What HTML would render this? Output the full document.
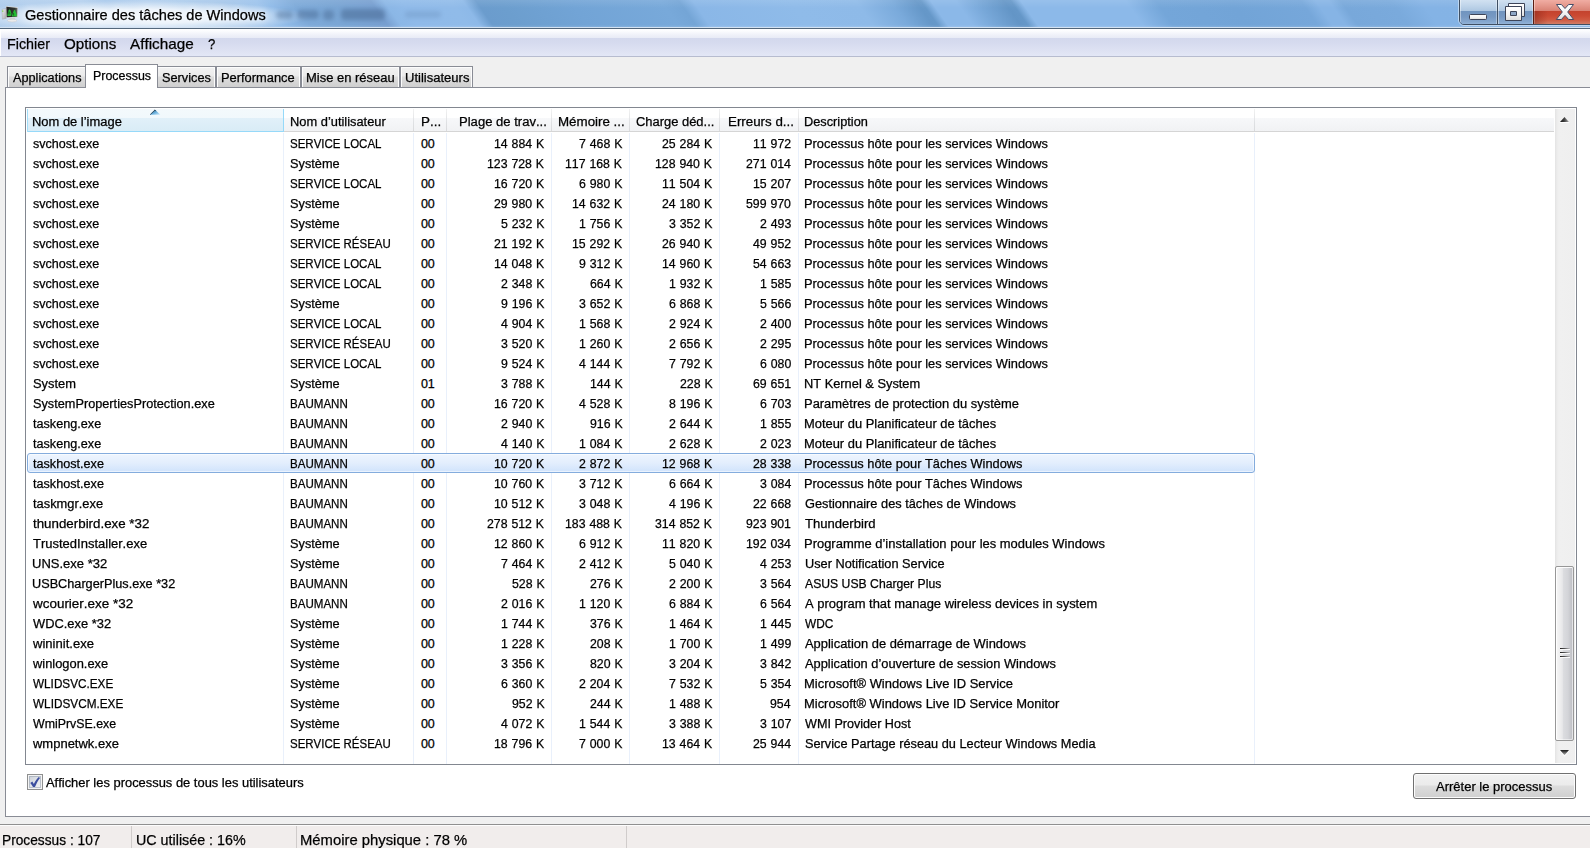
<!DOCTYPE html>
<html lang="fr"><head><meta charset="utf-8"><title>Gestionnaire des tâches de Windows</title>
<style>
html,body{margin:0;padding:0}
body{width:1590px;height:848px;overflow:hidden;position:relative;background:#f0f0f0;font-family:"Liberation Sans",sans-serif;font-kerning:none;color:#000}
div,span,svg{position:absolute;box-sizing:border-box}
.t{white-space:pre;line-height:20px;height:20px;transform-origin:0 0;display:block}
.ttl{text-shadow:0 0 6px rgba(255,255,255,.95),0 0 10px rgba(255,255,255,.8),0 0 14px rgba(255,255,255,.6)}
/* title bar */
#tb{left:0;top:0;width:1590px;height:27px;background:#8db8e8}
#tbl1{left:0;top:27px;width:1590px;height:1px;background:#d3e2f2}
#tbl2{left:0;top:28px;width:1590px;height:1px;background:#52667a}
/* menu */
#menubar{left:0;top:29px;width:1590px;height:28px;background:linear-gradient(#ffffff 0,#fbfcfe 2px,#eff1f9 6px,#e8ebf6 9px,#d3d8ed 9px,#d5daee 13px,#dde1f2 21px,#e3e7f6 27px,#b7bccf 27px,#b7bccf 28px)}
/* pane */
#pane{left:5px;top:87px;width:1600px;height:730px;background:#fff;border:1px solid #898c95}
.tab{top:66px;height:21px;border:1px solid #898c95;border-bottom:none;background:linear-gradient(#f2f2f2 0,#ebebeb 9px,#dddddd 10px,#cfcfcf 20px);box-shadow:inset 1px 1px 0 #fcfcfc,inset -1px 0 0 #fcfcfc}
.tab.act{top:64px;height:24px;background:#fff;box-shadow:none}
/* list */
#list{left:25px;top:107px;width:1552px;height:658px;background:#fff;border:1px solid #828790}
#hdr{left:27px;top:109px;width:1527px;height:23px;background:linear-gradient(#ffffff 0,#ffffff 9px,#f7f8fa 9px,#f1f2f4 22px,#d5d5d5 22px,#d5d5d5 23px)}
#hdr1{left:27px;top:109px;width:257px;height:23px;background:linear-gradient(#f3f9fc 0,#f1f8fc 9px,#e1f0f9 9px,#d9ecf6 22px,#96d9f9 22px,#96d9f9 23px);border-right:1px solid #96d9f9;border-left:1px solid #a3def9}
.hsep{top:109px;width:1px;height:22px;background:linear-gradient(#f2f2f2,#dfe1e4 60%,#d9dadc)}
.csep{top:133px;width:1px;height:631px;background:#e9f0fb}
#sortarrow{left:148px;top:107.9px}
#sel{left:27px;width:1228px;height:20px;border:1px solid #84acdd;border-radius:3px;background:linear-gradient(#eef5fe 0,#e3eefd 50%,#d0e3fc 100%);box-shadow:inset 0 0 0 1px rgba(255,255,255,.55)}
/* checkbox */
#cb{left:27px;top:774px;width:16px;height:16px;border:1px solid #8e8f8f;background:linear-gradient(135deg,#c6ccd5 0,#dfe2e7 45%,#f6f6f7 100%);box-shadow:inset 0 0 0 1px #f4f4f4,inset 0 0 0 2px rgba(150,160,175,.55)}
#cb svg{left:-1px;top:-1px}
/* button */
#btn{left:1413px;top:773px;width:163px;height:26px;border:1px solid #707070;border-radius:3px;background:linear-gradient(#f2f2f2 0,#ebebeb 11px,#dddddd 12px,#cfcfcf 24px);box-shadow:inset 0 0 0 1px #fcfcfc}
/* status */
#status{left:0;top:824px;width:1590px;height:24px;background:#f1edec;border-top:1px solid #909090;box-shadow:inset 0 1px 0 #fdfdfd}
.ssep{top:826px;width:1px;height:22px;background:#d0cccb}
#tb{overflow:hidden;background:#86b3e4}
#tbg{left:-60px;top:-4px;width:1710px;height:36px;transform:skewX(35deg);transform-origin:50% 50%;
background:linear-gradient(90deg,
#a9c9eb 0,#b4d0ee 150px,#a7c8eb 175px,#b2cfee 215px,#acccec 250px,#a6c7ea 290px,#9cc3ec 325px,#90bbe8 338px,#7eaad9 362px,#79a5d4 400px,#779fd0 440px,#8bb7e6 453px,#8fbae9 470px,#90bbe9 520px,#8db9e8 532px,#6b9ccd 545px,#6c9ece 570px,#72a4d6 640px,#78a9da 730px,#74a5d6 748px,#8ab7e7 762px,#8fbbe9 860px,#8ebae8 925px,#7aaadb 960px,#6597c8 985px,#6698c9 990px,#8bb8e8 1000px,#8bb8e8 1025px,#78a8d9 1046px,#6395c6 1073px,#6597c8 1080px,#8cb9e9 1090px,#8cb9e9 1195px,#74a6d9 1225px,#72a4d7 1300px,#76a7da 1370px,#86b4e5 1385px,#86b4e5 1398px,#78a8da 1410px,#7aaadc 1460px,#84b3e5 1490px,#86b4e6 1710px)}
#tbv{left:0;top:0;width:1590px;height:27px;background:linear-gradient(rgba(255,255,255,.10) 0,rgba(255,255,255,0) 8px,rgba(255,255,255,0) 25px,rgba(255,255,255,.12) 27px)}
#glow{left:-40px;top:0px;width:350px;height:32px;background:radial-gradient(ellipse 50% 50% at 50% 52%,rgba(255,255,255,.82) 0,rgba(255,255,255,.72) 45%,rgba(255,255,255,.35) 75%,rgba(255,255,255,0) 100%)}
.smg{filter:blur(2px);border-radius:4px}
#wbo{left:1458px;top:-6px;width:140px;height:32px;border:1px solid rgba(205,225,246,.75);border-radius:0 0 0 6px}
#wb{left:1459px;top:-5px;width:140px;height:30px;border:1px solid #3f4f63;border-radius:0 0 0 5px;overflow:hidden}
#wb>*{margin-top:4px}
#bmin,#bmax{top:0;height:24px;background:linear-gradient(#d1e1f1 0,#c2d6eb 5px,#afc8e2 10.5px,#7094bf 11.5px,#7799c3 17px,#86a8cf 22px,#94b4d8 24px);box-shadow:inset 1px 0 0 rgba(255,255,255,.45),inset -1px 0 0 rgba(255,255,255,.35)}
#bmin{left:0;width:37px}
#bmax{left:38px;width:35px}
.wdiv{top:0;width:1px;height:24px;background:#3f4f63}
#bclose{left:73px;top:0;width:70px;height:24px;border-left:1px solid #5a1c12;background:linear-gradient(#f0ada3 0,#e69a8e 5px,#d98375 10.5px,#c4432e 11.5px,#cb4a33 16px,#cf5a42 20px,#d27d66 24px);box-shadow:inset 1px 0 0 rgba(255,220,210,.6)}
#wb svg{margin-top:4px}
#sb{left:1555px;top:109px;width:20px;height:654px;background:linear-gradient(90deg,#e3e3e3 0,#ececec 2px,#f0f0f0 4px,#efefef 100%)}
#thumb{left:1555px;top:566px;width:19px;height:175px;border:1px solid #979797;border-radius:2px;background:linear-gradient(90deg,#f6f6f6 0,#ececed 5px,#e6e6e8 6.5px,#dcdde0 7px,#d3d4d8 12px,#c0c1c6 16px,#d2d2d6 17px);box-shadow:inset 1px 1px 0 rgba(255,255,255,.9),inset -1px -1px 0 rgba(255,255,255,.5)}
#grip{left:4px;top:81px;width:10px;height:10px;background:
 linear-gradient(90deg,#1e1e1e,#555 45%,#c2c2c6) 0 0/10px 1px no-repeat,
 linear-gradient(90deg,#1e1e1e,#555 45%,#c2c2c6) 0 4px/10px 1px no-repeat,
 linear-gradient(90deg,#1e1e1e,#555 45%,#c2c2c6) 0 8px/10px 1px no-repeat,
 linear-gradient(rgba(255,255,255,.85),rgba(255,255,255,.85)) 0 1px/10px 1px no-repeat,
 linear-gradient(rgba(255,255,255,.85),rgba(255,255,255,.85)) 0 5px/10px 1px no-repeat,
 linear-gradient(rgba(255,255,255,.85),rgba(255,255,255,.85)) 0 9px/10px 1px no-repeat}
.tab.nor{border-right:none;box-shadow:inset 1px 1px 0 #fcfcfc}
.tab.nol{border-left:none;box-shadow:inset 0 1px 0 #fcfcfc,inset -1px 0 0 #fcfcfc}
.t{-webkit-text-stroke:0.25px #000}
#mbl{left:0;top:29px;width:1px;height:27px;background:#fff}
#bcb{left:1533px;top:24px;width:57px;height:1px;background:#6e2418}
#bclose::after{content:"";position:absolute;left:0;top:11px;width:14px;height:13px;background:linear-gradient(90deg,rgba(110,25,15,.38),rgba(110,25,15,0))}

</style></head>
<body>
<div id="tb"><div id="tbg"></div><div id="tbv"></div><div id="glow"></div><div class="smg" style="left:276px;top:11px;width:17px;height:8px;background:#3f5f88;opacity:0.38"></div><div class="smg" style="left:297px;top:10px;width:22px;height:9px;background:#3f5f88;opacity:0.42"></div><div class="smg" style="left:323px;top:10px;width:11px;height:10px;background:#3f5f88;opacity:0.4"></div><div class="smg" style="left:341px;top:9px;width:44px;height:11px;background:#3f5f88;opacity:0.45"></div><div class="smg" style="left:405px;top:11px;width:36px;height:7px;background:#3f5f88;opacity:0.16"></div></div>
<div id="tbl1"></div><div id="tbl2"></div>
<svg id="ico" width="20" height="20" viewBox="0 0 20 20" style="left:0;top:4px">
<defs><linearGradient id="ig" x1="0" y1="0" x2="1" y2="1"><stop offset="0" stop-color="#f2f2f2"/><stop offset="1" stop-color="#a4a6a9"/></linearGradient>
<linearGradient id="sg2" x1="0" y1="0" x2="1" y2="0"><stop offset="0" stop-color="#1f211f"/><stop offset=".75" stop-color="#333633"/><stop offset="1" stop-color="#6a6c6a"/></linearGradient></defs>
<path d="M2 5.4 L6.2 4.4 L6.4 14.2 L2.4 15.2 Z" fill="url(#ig)" stroke="#9a9da1" stroke-width=".4"/>
<rect x="2.2" y="6.4" width="1.1" height="1.5" fill="#7bd44e"/>
<path d="M5.9 2.1 L17.9 3.3 L17.7 13.4 L6.3 13.9 Z" fill="#d9d9d9"/>
<path d="M6.4 2.8 L17.4 3.9 L17.2 12.8 L6.7 13.2 Z" fill="url(#sg2)"/>
<path d="M7.3 11.2 L8 8.6 L8.8 6.2 L9.7 5.3 L10.5 6.6 L11.4 9.4 L11.2 11.8 L7.5 12 Z" fill="#23be33"/>
<path d="M11.9 12 L13 8.8 L14.1 5.9 L15 5.7 L15.9 8.4 L17 11.2 L16.9 12.3 L12 12.4 Z" fill="#23be33"/>
<path d="M8.3 8.3 L10.2 8.2 M8 9.9 L10.6 9.8 M13.6 8.9 L13.6 11.6" stroke="#0d4a14" stroke-width=".7"/>
<path d="M9.8 13.9 L14.8 13.7 L15.6 15.8 L9 16.1 Z" fill="#cfd0d2"/>
<ellipse cx="12.2" cy="16.6" rx="4.8" ry="1.4" fill="#ebebeb" stroke="#bfc1c4" stroke-width=".4"/>
</svg>
<div id="wbo"></div><div id="bcb"></div>
<div id="wb">
 <div id="bmin"></div><div id="bmax"></div><div id="bclose"></div>
 <div class="wdiv" style="left:37px"></div>
 <svg width="131" height="24" viewBox="0 0 131 24" style="left:-1px;top:0">
  <defs><linearGradient id="wg" x1="0" y1="0" x2="0" y2="1"><stop offset="0" stop-color="#ffffff"/><stop offset=".55" stop-color="#f4f4f4"/><stop offset="1" stop-color="#dcdcdc"/></linearGradient></defs>
  <rect x="10.5" y="14.5" width="17" height="5" rx="1" fill="url(#wg)" stroke="#3d4458" stroke-width="1"/>
  <path d="M49.5 3.5 H65.5 V16.5 H49.5 Z" fill="url(#wg)" stroke="#3d4458" stroke-width="1" stroke-linejoin="round"/>
  <path d="M46.5 6.5 H62.5 V20.5 H46.5 Z M51.5 11.5 V15.5 H57.5 V11.5 Z" fill="url(#wg)" fill-rule="evenodd" stroke="#3d4458" stroke-width="1" stroke-linejoin="round"/>
  <rect x="52" y="12" width="5" height="3" fill="#8ea7c6"/>
  <path d="M97.5 4.5 H102.4 L106 8.5 L109.6 4.5 H114.5 L108.7 12 L114.7 19.5 H109.6 L106 15.4 L102.4 19.5 H97.3 L103.3 12 Z" fill="url(#wg)" stroke="#454c66" stroke-width="1" stroke-linejoin="round"/>
 </svg>
</div>

<span class="t ttl" style="left:24.77px;top:4.50px;font-size:15px;transform:scaleX(0.9723);">Gestionnaire des tâches de Windows</span>
<div id="menubar"></div><div id="mbl"></div>
<span class="t" style="left:6.63px;top:33.50px;font-size:15px;transform:scaleX(0.9534);">Fichier</span>
<span class="t" style="left:63.78px;top:33.50px;font-size:15px;transform:scaleX(1.0111);">Options</span>
<span class="t" style="left:130.47px;top:33.50px;font-size:15px;transform:scaleX(1.0187);">Affichage</span>
<span class="t" style="left:208.06px;top:33.50px;font-size:15px;transform:scaleX(0.8786);">?</span>
<div id="pane"></div>
<div class="tab nor" style="left:7px;width:78px"></div>
<div class="tab act" style="left:85px;width:73px"></div>
<div class="tab nol" style="left:158px;width:58px"></div>
<div class="tab" style="left:216px;width:85px"></div>
<div class="tab" style="left:301px;width:99px"></div>
<div class="tab" style="left:400px;width:73px"></div>
<span class="t" style="left:13.28px;top:68.00px;font-size:12.5px;transform:scaleX(1.0161);">Applications</span>
<span class="t" style="left:92.58px;top:66.00px;font-size:12.5px;transform:scaleX(0.9951);">Processus</span>
<span class="t" style="left:161.72px;top:68.00px;font-size:12.5px;transform:scaleX(1.0189);">Services</span>
<span class="t" style="left:221.24px;top:68.00px;font-size:12.5px;transform:scaleX(1.0289);">Performance</span>
<span class="t" style="left:306.24px;top:68.00px;font-size:12.5px;transform:scaleX(1.0370);">Mise en réseau</span>
<span class="t" style="left:404.99px;top:68.00px;font-size:12.5px;transform:scaleX(1.0429);">Utilisateurs</span>
<div id="list">
</div>
<div id="hdr"></div><div id="hdr1"></div>
<div class="hsep" style="left:413px"></div>
<div class="hsep" style="left:446px"></div>
<div class="hsep" style="left:551px"></div>
<div class="hsep" style="left:629px"></div>
<div class="hsep" style="left:719px"></div>
<div class="hsep" style="left:798px"></div>
<div class="hsep" style="left:1254px"></div>
<div class="csep" style="left:283px"></div>
<div class="csep" style="left:413px"></div>
<div class="csep" style="left:446px"></div>
<div class="csep" style="left:551px"></div>
<div class="csep" style="left:629px"></div>
<div class="csep" style="left:719px"></div>
<div class="csep" style="left:798px"></div>
<div class="csep" style="left:1254px"></div>
<svg id="sortarrow" width="14" height="8" viewBox="0 0 14 8"><defs><linearGradient id="sg" x1="0.15" y1="0.3" x2="0.9" y2="1"><stop offset="0" stop-color="#2f6c97"/><stop offset=".45" stop-color="#6fb4e0"/><stop offset="1" stop-color="#c9e7f8"/></linearGradient></defs><path d="M1.2 7 L7 1 L12.8 7 Z" fill="#fff" opacity=".75"/><path d="M2 6.8 L7 1.8 L12.5 6.8 Z" fill="url(#sg)"/><path d="M2.2 6.6 L7 1.9 L7.9 2.8" fill="none" stroke="#1d3b50" stroke-width=".85"/></svg>
<span class="t" style="left:32.34px;top:112.00px;font-size:12.5px;transform:scaleX(1.0345);">Nom de l’image</span>
<span class="t" style="left:289.55px;top:112.00px;font-size:12.5px;transform:scaleX(1.0288);">Nom d’utilisateur</span>
<span class="t" style="left:421.30px;top:112.00px;font-size:12.5px;transform:scaleX(1.0730);">P...</span>
<span class="t" style="left:458.53px;top:112.00px;font-size:12.5px;transform:scaleX(1.0451);">Plage de trav...</span>
<span class="t" style="left:557.61px;top:112.00px;font-size:12.5px;transform:scaleX(1.0672);">Mémoire ...</span>
<span class="t" style="left:635.74px;top:112.00px;font-size:12.5px;transform:scaleX(1.0342);">Charge déd...</span>
<span class="t" style="left:727.61px;top:112.00px;font-size:12.5px;transform:scaleX(1.0661);">Erreurs d...</span>
<span class="t" style="left:804.45px;top:112.00px;font-size:12.5px;transform:scaleX(1.0216);">Description</span>
<div id="sel" style="top:453px"></div>
<span class="t" style="left:32.85px;top:134.00px;font-size:12.5px;transform:scaleX(1.0046);">svchost.exe</span>
<span class="t" style="left:289.98px;top:134.00px;font-size:12.5px;transform:scaleX(0.9211);">SERVICE LOCAL</span>
<span class="t" style="left:420.91px;top:134.00px;font-size:12.5px;">00</span>
<span class="t" style="left:494.26px;top:134.00px;font-size:12.5px;transform:scaleX(0.9830);word-spacing:0.5px;">14 884 K</span>
<span class="t" style="left:579.00px;top:134.00px;font-size:12.5px;transform:scaleX(0.9830);word-spacing:0.5px;">7 468 K</span>
<span class="t" style="left:662.16px;top:134.00px;font-size:12.5px;transform:scaleX(0.9830);word-spacing:0.5px;">25 284 K</span>
<span class="t" style="left:752.94px;top:134.00px;font-size:12.5px;transform:scaleX(0.9830);word-spacing:0.5px;">11 972</span>
<span class="t" style="left:804.45px;top:134.00px;font-size:12.5px;transform:scaleX(1.0262);">Processus hôte pour les services Windows</span>
<span class="t" style="left:32.85px;top:154.00px;font-size:12.5px;transform:scaleX(1.0046);">svchost.exe</span>
<span class="t" style="left:289.92px;top:154.00px;font-size:12.5px;transform:scaleX(1.0210);">Système</span>
<span class="t" style="left:420.91px;top:154.00px;font-size:12.5px;">00</span>
<span class="t" style="left:487.43px;top:154.00px;font-size:12.5px;transform:scaleX(0.9830);word-spacing:0.5px;">123 728 K</span>
<span class="t" style="left:565.33px;top:154.00px;font-size:12.5px;transform:scaleX(0.9830);word-spacing:0.5px;">117 168 K</span>
<span class="t" style="left:655.33px;top:154.00px;font-size:12.5px;transform:scaleX(0.9830);word-spacing:0.5px;">128 940 K</span>
<span class="t" style="left:745.85px;top:154.00px;font-size:12.5px;transform:scaleX(0.9830);word-spacing:0.5px;">271 014</span>
<span class="t" style="left:804.45px;top:154.00px;font-size:12.5px;transform:scaleX(1.0262);">Processus hôte pour les services Windows</span>
<span class="t" style="left:32.85px;top:174.00px;font-size:12.5px;transform:scaleX(1.0046);">svchost.exe</span>
<span class="t" style="left:289.98px;top:174.00px;font-size:12.5px;transform:scaleX(0.9211);">SERVICE LOCAL</span>
<span class="t" style="left:420.91px;top:174.00px;font-size:12.5px;">00</span>
<span class="t" style="left:494.26px;top:174.00px;font-size:12.5px;transform:scaleX(0.9830);word-spacing:0.5px;">16 720 K</span>
<span class="t" style="left:579.00px;top:174.00px;font-size:12.5px;transform:scaleX(0.9830);word-spacing:0.5px;">6 980 K</span>
<span class="t" style="left:662.16px;top:174.00px;font-size:12.5px;transform:scaleX(0.9830);word-spacing:0.5px;">11 504 K</span>
<span class="t" style="left:752.94px;top:174.00px;font-size:12.5px;transform:scaleX(0.9830);word-spacing:0.5px;">15 207</span>
<span class="t" style="left:804.45px;top:174.00px;font-size:12.5px;transform:scaleX(1.0262);">Processus hôte pour les services Windows</span>
<span class="t" style="left:32.85px;top:194.00px;font-size:12.5px;transform:scaleX(1.0046);">svchost.exe</span>
<span class="t" style="left:289.92px;top:194.00px;font-size:12.5px;transform:scaleX(1.0210);">Système</span>
<span class="t" style="left:420.91px;top:194.00px;font-size:12.5px;">00</span>
<span class="t" style="left:494.26px;top:194.00px;font-size:12.5px;transform:scaleX(0.9830);word-spacing:0.5px;">29 980 K</span>
<span class="t" style="left:572.16px;top:194.00px;font-size:12.5px;transform:scaleX(0.9830);word-spacing:0.5px;">14 632 K</span>
<span class="t" style="left:662.16px;top:194.00px;font-size:12.5px;transform:scaleX(0.9830);word-spacing:0.5px;">24 180 K</span>
<span class="t" style="left:745.97px;top:194.00px;font-size:12.5px;transform:scaleX(0.9830);word-spacing:0.5px;">599 970</span>
<span class="t" style="left:804.45px;top:194.00px;font-size:12.5px;transform:scaleX(1.0262);">Processus hôte pour les services Windows</span>
<span class="t" style="left:32.85px;top:214.00px;font-size:12.5px;transform:scaleX(1.0046);">svchost.exe</span>
<span class="t" style="left:289.92px;top:214.00px;font-size:12.5px;transform:scaleX(1.0210);">Système</span>
<span class="t" style="left:420.91px;top:214.00px;font-size:12.5px;">00</span>
<span class="t" style="left:501.10px;top:214.00px;font-size:12.5px;transform:scaleX(0.9830);word-spacing:0.5px;">5 232 K</span>
<span class="t" style="left:579.00px;top:214.00px;font-size:12.5px;transform:scaleX(0.9830);word-spacing:0.5px;">1 756 K</span>
<span class="t" style="left:669.00px;top:214.00px;font-size:12.5px;transform:scaleX(0.9830);word-spacing:0.5px;">3 352 K</span>
<span class="t" style="left:759.70px;top:214.00px;font-size:12.5px;transform:scaleX(0.9830);word-spacing:0.5px;">2 493</span>
<span class="t" style="left:804.45px;top:214.00px;font-size:12.5px;transform:scaleX(1.0262);">Processus hôte pour les services Windows</span>
<span class="t" style="left:32.85px;top:234.00px;font-size:12.5px;transform:scaleX(1.0046);">svchost.exe</span>
<span class="t" style="left:289.98px;top:234.00px;font-size:12.5px;transform:scaleX(0.9176);">SERVICE RÉSEAU</span>
<span class="t" style="left:420.91px;top:234.00px;font-size:12.5px;">00</span>
<span class="t" style="left:494.26px;top:234.00px;font-size:12.5px;transform:scaleX(0.9830);word-spacing:0.5px;">21 192 K</span>
<span class="t" style="left:572.16px;top:234.00px;font-size:12.5px;transform:scaleX(0.9830);word-spacing:0.5px;">15 292 K</span>
<span class="t" style="left:662.16px;top:234.00px;font-size:12.5px;transform:scaleX(0.9830);word-spacing:0.5px;">26 940 K</span>
<span class="t" style="left:752.94px;top:234.00px;font-size:12.5px;transform:scaleX(0.9830);word-spacing:0.5px;">49 952</span>
<span class="t" style="left:804.45px;top:234.00px;font-size:12.5px;transform:scaleX(1.0262);">Processus hôte pour les services Windows</span>
<span class="t" style="left:32.85px;top:254.00px;font-size:12.5px;transform:scaleX(1.0046);">svchost.exe</span>
<span class="t" style="left:289.98px;top:254.00px;font-size:12.5px;transform:scaleX(0.9211);">SERVICE LOCAL</span>
<span class="t" style="left:420.91px;top:254.00px;font-size:12.5px;">00</span>
<span class="t" style="left:494.26px;top:254.00px;font-size:12.5px;transform:scaleX(0.9830);word-spacing:0.5px;">14 048 K</span>
<span class="t" style="left:579.00px;top:254.00px;font-size:12.5px;transform:scaleX(0.9830);word-spacing:0.5px;">9 312 K</span>
<span class="t" style="left:662.16px;top:254.00px;font-size:12.5px;transform:scaleX(0.9830);word-spacing:0.5px;">14 960 K</span>
<span class="t" style="left:752.87px;top:254.00px;font-size:12.5px;transform:scaleX(0.9830);word-spacing:0.5px;">54 663</span>
<span class="t" style="left:804.45px;top:254.00px;font-size:12.5px;transform:scaleX(1.0262);">Processus hôte pour les services Windows</span>
<span class="t" style="left:32.85px;top:274.00px;font-size:12.5px;transform:scaleX(1.0046);">svchost.exe</span>
<span class="t" style="left:289.98px;top:274.00px;font-size:12.5px;transform:scaleX(0.9211);">SERVICE LOCAL</span>
<span class="t" style="left:420.91px;top:274.00px;font-size:12.5px;">00</span>
<span class="t" style="left:501.10px;top:274.00px;font-size:12.5px;transform:scaleX(0.9830);word-spacing:0.5px;">2 348 K</span>
<span class="t" style="left:589.74px;top:274.00px;font-size:12.5px;transform:scaleX(0.9830);word-spacing:0.5px;">664 K</span>
<span class="t" style="left:669.00px;top:274.00px;font-size:12.5px;transform:scaleX(0.9830);word-spacing:0.5px;">1 932 K</span>
<span class="t" style="left:759.68px;top:274.00px;font-size:12.5px;transform:scaleX(0.9830);word-spacing:0.5px;">1 585</span>
<span class="t" style="left:804.45px;top:274.00px;font-size:12.5px;transform:scaleX(1.0262);">Processus hôte pour les services Windows</span>
<span class="t" style="left:32.85px;top:294.00px;font-size:12.5px;transform:scaleX(1.0046);">svchost.exe</span>
<span class="t" style="left:289.92px;top:294.00px;font-size:12.5px;transform:scaleX(1.0210);">Système</span>
<span class="t" style="left:420.91px;top:294.00px;font-size:12.5px;">00</span>
<span class="t" style="left:501.10px;top:294.00px;font-size:12.5px;transform:scaleX(0.9830);word-spacing:0.5px;">9 196 K</span>
<span class="t" style="left:579.00px;top:294.00px;font-size:12.5px;transform:scaleX(0.9830);word-spacing:0.5px;">3 652 K</span>
<span class="t" style="left:669.00px;top:294.00px;font-size:12.5px;transform:scaleX(0.9830);word-spacing:0.5px;">6 868 K</span>
<span class="t" style="left:759.70px;top:294.00px;font-size:12.5px;transform:scaleX(0.9830);word-spacing:0.5px;">5 566</span>
<span class="t" style="left:804.45px;top:294.00px;font-size:12.5px;transform:scaleX(1.0262);">Processus hôte pour les services Windows</span>
<span class="t" style="left:32.85px;top:314.00px;font-size:12.5px;transform:scaleX(1.0046);">svchost.exe</span>
<span class="t" style="left:289.98px;top:314.00px;font-size:12.5px;transform:scaleX(0.9211);">SERVICE LOCAL</span>
<span class="t" style="left:420.91px;top:314.00px;font-size:12.5px;">00</span>
<span class="t" style="left:501.10px;top:314.00px;font-size:12.5px;transform:scaleX(0.9830);word-spacing:0.5px;">4 904 K</span>
<span class="t" style="left:579.00px;top:314.00px;font-size:12.5px;transform:scaleX(0.9830);word-spacing:0.5px;">1 568 K</span>
<span class="t" style="left:669.00px;top:314.00px;font-size:12.5px;transform:scaleX(0.9830);word-spacing:0.5px;">2 924 K</span>
<span class="t" style="left:759.64px;top:314.00px;font-size:12.5px;transform:scaleX(0.9830);word-spacing:0.5px;">2 400</span>
<span class="t" style="left:804.45px;top:314.00px;font-size:12.5px;transform:scaleX(1.0262);">Processus hôte pour les services Windows</span>
<span class="t" style="left:32.85px;top:334.00px;font-size:12.5px;transform:scaleX(1.0046);">svchost.exe</span>
<span class="t" style="left:289.98px;top:334.00px;font-size:12.5px;transform:scaleX(0.9176);">SERVICE RÉSEAU</span>
<span class="t" style="left:420.91px;top:334.00px;font-size:12.5px;">00</span>
<span class="t" style="left:501.10px;top:334.00px;font-size:12.5px;transform:scaleX(0.9830);word-spacing:0.5px;">3 520 K</span>
<span class="t" style="left:579.00px;top:334.00px;font-size:12.5px;transform:scaleX(0.9830);word-spacing:0.5px;">1 260 K</span>
<span class="t" style="left:669.00px;top:334.00px;font-size:12.5px;transform:scaleX(0.9830);word-spacing:0.5px;">2 656 K</span>
<span class="t" style="left:759.68px;top:334.00px;font-size:12.5px;transform:scaleX(0.9830);word-spacing:0.5px;">2 295</span>
<span class="t" style="left:804.45px;top:334.00px;font-size:12.5px;transform:scaleX(1.0262);">Processus hôte pour les services Windows</span>
<span class="t" style="left:32.85px;top:354.00px;font-size:12.5px;transform:scaleX(1.0046);">svchost.exe</span>
<span class="t" style="left:289.98px;top:354.00px;font-size:12.5px;transform:scaleX(0.9211);">SERVICE LOCAL</span>
<span class="t" style="left:420.91px;top:354.00px;font-size:12.5px;">00</span>
<span class="t" style="left:501.10px;top:354.00px;font-size:12.5px;transform:scaleX(0.9830);word-spacing:0.5px;">9 524 K</span>
<span class="t" style="left:579.00px;top:354.00px;font-size:12.5px;transform:scaleX(0.9830);word-spacing:0.5px;">4 144 K</span>
<span class="t" style="left:669.00px;top:354.00px;font-size:12.5px;transform:scaleX(0.9830);word-spacing:0.5px;">7 792 K</span>
<span class="t" style="left:759.64px;top:354.00px;font-size:12.5px;transform:scaleX(0.9830);word-spacing:0.5px;">6 080</span>
<span class="t" style="left:804.45px;top:354.00px;font-size:12.5px;transform:scaleX(1.0262);">Processus hôte pour les services Windows</span>
<span class="t" style="left:32.62px;top:374.00px;font-size:12.5px;transform:scaleX(1.0302);">System</span>
<span class="t" style="left:289.92px;top:374.00px;font-size:12.5px;transform:scaleX(1.0210);">Système</span>
<span class="t" style="left:420.91px;top:374.00px;font-size:12.5px;">01</span>
<span class="t" style="left:501.10px;top:374.00px;font-size:12.5px;transform:scaleX(0.9830);word-spacing:0.5px;">3 788 K</span>
<span class="t" style="left:589.74px;top:374.00px;font-size:12.5px;transform:scaleX(0.9830);word-spacing:0.5px;">144 K</span>
<span class="t" style="left:679.74px;top:374.00px;font-size:12.5px;transform:scaleX(0.9830);word-spacing:0.5px;">228 K</span>
<span class="t" style="left:752.93px;top:374.00px;font-size:12.5px;transform:scaleX(0.9830);word-spacing:0.5px;">69 651</span>
<span class="t" style="left:804.45px;top:374.00px;font-size:12.5px;transform:scaleX(1.0262);">NT Kernel &amp; System</span>
<span class="t" style="left:32.62px;top:394.00px;font-size:12.5px;transform:scaleX(1.0179);">SystemPropertiesProtection.exe</span>
<span class="t" style="left:289.55px;top:394.00px;font-size:12.5px;transform:scaleX(0.9246);">BAUMANN</span>
<span class="t" style="left:420.91px;top:394.00px;font-size:12.5px;">00</span>
<span class="t" style="left:494.26px;top:394.00px;font-size:12.5px;transform:scaleX(0.9830);word-spacing:0.5px;">16 720 K</span>
<span class="t" style="left:579.00px;top:394.00px;font-size:12.5px;transform:scaleX(0.9830);word-spacing:0.5px;">4 528 K</span>
<span class="t" style="left:669.00px;top:394.00px;font-size:12.5px;transform:scaleX(0.9830);word-spacing:0.5px;">8 196 K</span>
<span class="t" style="left:759.70px;top:394.00px;font-size:12.5px;transform:scaleX(0.9830);word-spacing:0.5px;">6 703</span>
<span class="t" style="left:804.44px;top:394.00px;font-size:12.5px;transform:scaleX(1.0346);">Paramètres de protection du système</span>
<span class="t" style="left:33.01px;top:414.00px;font-size:12.5px;transform:scaleX(1.0111);">taskeng.exe</span>
<span class="t" style="left:289.55px;top:414.00px;font-size:12.5px;transform:scaleX(0.9246);">BAUMANN</span>
<span class="t" style="left:420.91px;top:414.00px;font-size:12.5px;">00</span>
<span class="t" style="left:501.10px;top:414.00px;font-size:12.5px;transform:scaleX(0.9830);word-spacing:0.5px;">2 940 K</span>
<span class="t" style="left:589.74px;top:414.00px;font-size:12.5px;transform:scaleX(0.9830);word-spacing:0.5px;">916 K</span>
<span class="t" style="left:669.00px;top:414.00px;font-size:12.5px;transform:scaleX(0.9830);word-spacing:0.5px;">2 644 K</span>
<span class="t" style="left:759.68px;top:414.00px;font-size:12.5px;transform:scaleX(0.9830);word-spacing:0.5px;">1 855</span>
<span class="t" style="left:804.44px;top:414.00px;font-size:12.5px;transform:scaleX(1.0323);">Moteur du Planificateur de tâches</span>
<span class="t" style="left:33.01px;top:434.00px;font-size:12.5px;transform:scaleX(1.0111);">taskeng.exe</span>
<span class="t" style="left:289.55px;top:434.00px;font-size:12.5px;transform:scaleX(0.9246);">BAUMANN</span>
<span class="t" style="left:420.91px;top:434.00px;font-size:12.5px;">00</span>
<span class="t" style="left:501.10px;top:434.00px;font-size:12.5px;transform:scaleX(0.9830);word-spacing:0.5px;">4 140 K</span>
<span class="t" style="left:579.00px;top:434.00px;font-size:12.5px;transform:scaleX(0.9830);word-spacing:0.5px;">1 084 K</span>
<span class="t" style="left:669.00px;top:434.00px;font-size:12.5px;transform:scaleX(0.9830);word-spacing:0.5px;">2 628 K</span>
<span class="t" style="left:759.70px;top:434.00px;font-size:12.5px;transform:scaleX(0.9830);word-spacing:0.5px;">2 023</span>
<span class="t" style="left:804.44px;top:434.00px;font-size:12.5px;transform:scaleX(1.0323);">Moteur du Planificateur de tâches</span>
<span class="t" style="left:33.01px;top:454.00px;font-size:12.5px;transform:scaleX(1.0110);">taskhost.exe</span>
<span class="t" style="left:289.55px;top:454.00px;font-size:12.5px;transform:scaleX(0.9246);">BAUMANN</span>
<span class="t" style="left:420.91px;top:454.00px;font-size:12.5px;">00</span>
<span class="t" style="left:494.26px;top:454.00px;font-size:12.5px;transform:scaleX(0.9830);word-spacing:0.5px;">10 720 K</span>
<span class="t" style="left:579.00px;top:454.00px;font-size:12.5px;transform:scaleX(0.9830);word-spacing:0.5px;">2 872 K</span>
<span class="t" style="left:662.16px;top:454.00px;font-size:12.5px;transform:scaleX(0.9830);word-spacing:0.5px;">12 968 K</span>
<span class="t" style="left:752.86px;top:454.00px;font-size:12.5px;transform:scaleX(0.9830);word-spacing:0.5px;">28 338</span>
<span class="t" style="left:804.45px;top:454.00px;font-size:12.5px;transform:scaleX(1.0240);">Processus hôte pour Tâches Windows</span>
<span class="t" style="left:33.01px;top:474.00px;font-size:12.5px;transform:scaleX(1.0110);">taskhost.exe</span>
<span class="t" style="left:289.55px;top:474.00px;font-size:12.5px;transform:scaleX(0.9246);">BAUMANN</span>
<span class="t" style="left:420.91px;top:474.00px;font-size:12.5px;">00</span>
<span class="t" style="left:494.26px;top:474.00px;font-size:12.5px;transform:scaleX(0.9830);word-spacing:0.5px;">10 760 K</span>
<span class="t" style="left:579.00px;top:474.00px;font-size:12.5px;transform:scaleX(0.9830);word-spacing:0.5px;">3 712 K</span>
<span class="t" style="left:669.00px;top:474.00px;font-size:12.5px;transform:scaleX(0.9830);word-spacing:0.5px;">6 664 K</span>
<span class="t" style="left:759.52px;top:474.00px;font-size:12.5px;transform:scaleX(0.9830);word-spacing:0.5px;">3 084</span>
<span class="t" style="left:804.45px;top:474.00px;font-size:12.5px;transform:scaleX(1.0240);">Processus hôte pour Tâches Windows</span>
<span class="t" style="left:33.01px;top:494.00px;font-size:12.5px;transform:scaleX(1.0292);">taskmgr.exe</span>
<span class="t" style="left:289.55px;top:494.00px;font-size:12.5px;transform:scaleX(0.9246);">BAUMANN</span>
<span class="t" style="left:420.91px;top:494.00px;font-size:12.5px;">00</span>
<span class="t" style="left:494.26px;top:494.00px;font-size:12.5px;transform:scaleX(0.9830);word-spacing:0.5px;">10 512 K</span>
<span class="t" style="left:579.00px;top:494.00px;font-size:12.5px;transform:scaleX(0.9830);word-spacing:0.5px;">3 048 K</span>
<span class="t" style="left:669.00px;top:494.00px;font-size:12.5px;transform:scaleX(0.9830);word-spacing:0.5px;">4 196 K</span>
<span class="t" style="left:752.86px;top:494.00px;font-size:12.5px;transform:scaleX(0.9830);word-spacing:0.5px;">22 668</span>
<span class="t" style="left:804.86px;top:494.00px;font-size:12.5px;transform:scaleX(1.0225);">Gestionnaire des tâches de Windows</span>
<span class="t" style="left:33.00px;top:514.00px;font-size:12.5px;transform:scaleX(1.0666);">thunderbird.exe *32</span>
<span class="t" style="left:289.55px;top:514.00px;font-size:12.5px;transform:scaleX(0.9246);">BAUMANN</span>
<span class="t" style="left:420.91px;top:514.00px;font-size:12.5px;">00</span>
<span class="t" style="left:487.43px;top:514.00px;font-size:12.5px;transform:scaleX(0.9830);word-spacing:0.5px;">278 512 K</span>
<span class="t" style="left:565.33px;top:514.00px;font-size:12.5px;transform:scaleX(0.9830);word-spacing:0.5px;">183 488 K</span>
<span class="t" style="left:655.33px;top:514.00px;font-size:12.5px;transform:scaleX(0.9830);word-spacing:0.5px;">314 852 K</span>
<span class="t" style="left:746.09px;top:514.00px;font-size:12.5px;transform:scaleX(0.9830);word-spacing:0.5px;">923 901</span>
<span class="t" style="left:805.21px;top:514.00px;font-size:12.5px;transform:scaleX(1.0465);">Thunderbird</span>
<span class="t" style="left:32.91px;top:534.00px;font-size:12.5px;transform:scaleX(1.0401);">TrustedInstaller.exe</span>
<span class="t" style="left:289.92px;top:534.00px;font-size:12.5px;transform:scaleX(1.0210);">Système</span>
<span class="t" style="left:420.91px;top:534.00px;font-size:12.5px;">00</span>
<span class="t" style="left:494.26px;top:534.00px;font-size:12.5px;transform:scaleX(0.9830);word-spacing:0.5px;">12 860 K</span>
<span class="t" style="left:579.00px;top:534.00px;font-size:12.5px;transform:scaleX(0.9830);word-spacing:0.5px;">6 912 K</span>
<span class="t" style="left:662.16px;top:534.00px;font-size:12.5px;transform:scaleX(0.9830);word-spacing:0.5px;">11 820 K</span>
<span class="t" style="left:745.85px;top:534.00px;font-size:12.5px;transform:scaleX(0.9830);word-spacing:0.5px;">192 034</span>
<span class="t" style="left:804.44px;top:534.00px;font-size:12.5px;transform:scaleX(1.0362);">Programme d’installation pour les modules Windows</span>
<span class="t" style="left:32.20px;top:554.00px;font-size:12.5px;transform:scaleX(1.0415);">UNS.exe *32</span>
<span class="t" style="left:289.92px;top:554.00px;font-size:12.5px;transform:scaleX(1.0210);">Système</span>
<span class="t" style="left:420.91px;top:554.00px;font-size:12.5px;">00</span>
<span class="t" style="left:501.10px;top:554.00px;font-size:12.5px;transform:scaleX(0.9830);word-spacing:0.5px;">7 464 K</span>
<span class="t" style="left:579.00px;top:554.00px;font-size:12.5px;transform:scaleX(0.9830);word-spacing:0.5px;">2 412 K</span>
<span class="t" style="left:669.00px;top:554.00px;font-size:12.5px;transform:scaleX(0.9830);word-spacing:0.5px;">5 040 K</span>
<span class="t" style="left:759.70px;top:554.00px;font-size:12.5px;transform:scaleX(0.9830);word-spacing:0.5px;">4 253</span>
<span class="t" style="left:804.52px;top:554.00px;font-size:12.5px;transform:scaleX(1.0197);">User Notification Service</span>
<span class="t" style="left:32.22px;top:574.00px;font-size:12.5px;transform:scaleX(1.0154);">USBChargerPlus.exe *32</span>
<span class="t" style="left:289.55px;top:574.00px;font-size:12.5px;transform:scaleX(0.9246);">BAUMANN</span>
<span class="t" style="left:420.91px;top:574.00px;font-size:12.5px;">00</span>
<span class="t" style="left:511.84px;top:574.00px;font-size:12.5px;transform:scaleX(0.9830);word-spacing:0.5px;">528 K</span>
<span class="t" style="left:589.74px;top:574.00px;font-size:12.5px;transform:scaleX(0.9830);word-spacing:0.5px;">276 K</span>
<span class="t" style="left:669.00px;top:574.00px;font-size:12.5px;transform:scaleX(0.9830);word-spacing:0.5px;">2 200 K</span>
<span class="t" style="left:759.52px;top:574.00px;font-size:12.5px;transform:scaleX(0.9830);word-spacing:0.5px;">3 564</span>
<span class="t" style="left:805.48px;top:574.00px;font-size:12.5px;transform:scaleX(0.9759);">ASUS USB Charger Plus</span>
<span class="t" style="left:33.22px;top:594.00px;font-size:12.5px;transform:scaleX(1.0758);">wcourier.exe *32</span>
<span class="t" style="left:289.55px;top:594.00px;font-size:12.5px;transform:scaleX(0.9246);">BAUMANN</span>
<span class="t" style="left:420.91px;top:594.00px;font-size:12.5px;">00</span>
<span class="t" style="left:501.10px;top:594.00px;font-size:12.5px;transform:scaleX(0.9830);word-spacing:0.5px;">2 016 K</span>
<span class="t" style="left:579.00px;top:594.00px;font-size:12.5px;transform:scaleX(0.9830);word-spacing:0.5px;">1 120 K</span>
<span class="t" style="left:669.00px;top:594.00px;font-size:12.5px;transform:scaleX(0.9830);word-spacing:0.5px;">6 884 K</span>
<span class="t" style="left:759.52px;top:594.00px;font-size:12.5px;transform:scaleX(0.9830);word-spacing:0.5px;">6 564</span>
<span class="t" style="left:805.47px;top:594.00px;font-size:12.5px;transform:scaleX(1.0359);">A program that manage wireless devices in system</span>
<span class="t" style="left:33.14px;top:614.00px;font-size:12.5px;transform:scaleX(1.0315);">WDC.exe *32</span>
<span class="t" style="left:289.92px;top:614.00px;font-size:12.5px;transform:scaleX(1.0210);">Système</span>
<span class="t" style="left:420.91px;top:614.00px;font-size:12.5px;">00</span>
<span class="t" style="left:501.10px;top:614.00px;font-size:12.5px;transform:scaleX(0.9830);word-spacing:0.5px;">1 744 K</span>
<span class="t" style="left:589.74px;top:614.00px;font-size:12.5px;transform:scaleX(0.9830);word-spacing:0.5px;">376 K</span>
<span class="t" style="left:669.00px;top:614.00px;font-size:12.5px;transform:scaleX(0.9830);word-spacing:0.5px;">1 464 K</span>
<span class="t" style="left:759.68px;top:614.00px;font-size:12.5px;transform:scaleX(0.9830);word-spacing:0.5px;">1 445</span>
<span class="t" style="left:805.45px;top:614.00px;font-size:12.5px;transform:scaleX(0.9481);">WDC</span>
<span class="t" style="left:33.22px;top:634.00px;font-size:12.5px;transform:scaleX(1.0445);">wininit.exe</span>
<span class="t" style="left:289.92px;top:634.00px;font-size:12.5px;transform:scaleX(1.0210);">Système</span>
<span class="t" style="left:420.91px;top:634.00px;font-size:12.5px;">00</span>
<span class="t" style="left:501.10px;top:634.00px;font-size:12.5px;transform:scaleX(0.9830);word-spacing:0.5px;">1 228 K</span>
<span class="t" style="left:589.74px;top:634.00px;font-size:12.5px;transform:scaleX(0.9830);word-spacing:0.5px;">208 K</span>
<span class="t" style="left:669.00px;top:634.00px;font-size:12.5px;transform:scaleX(0.9830);word-spacing:0.5px;">1 700 K</span>
<span class="t" style="left:759.74px;top:634.00px;font-size:12.5px;transform:scaleX(0.9830);word-spacing:0.5px;">1 499</span>
<span class="t" style="left:805.47px;top:634.00px;font-size:12.5px;transform:scaleX(1.0326);">Application de démarrage de Windows</span>
<span class="t" style="left:33.22px;top:654.00px;font-size:12.5px;transform:scaleX(1.0300);">winlogon.exe</span>
<span class="t" style="left:289.92px;top:654.00px;font-size:12.5px;transform:scaleX(1.0210);">Système</span>
<span class="t" style="left:420.91px;top:654.00px;font-size:12.5px;">00</span>
<span class="t" style="left:501.10px;top:654.00px;font-size:12.5px;transform:scaleX(0.9830);word-spacing:0.5px;">3 356 K</span>
<span class="t" style="left:589.74px;top:654.00px;font-size:12.5px;transform:scaleX(0.9830);word-spacing:0.5px;">820 K</span>
<span class="t" style="left:669.00px;top:654.00px;font-size:12.5px;transform:scaleX(0.9830);word-spacing:0.5px;">3 204 K</span>
<span class="t" style="left:759.78px;top:654.00px;font-size:12.5px;transform:scaleX(0.9830);word-spacing:0.5px;">3 842</span>
<span class="t" style="left:805.47px;top:654.00px;font-size:12.5px;transform:scaleX(1.0262);">Application d’ouverture de session Windows</span>
<span class="t" style="left:33.15px;top:674.00px;font-size:12.5px;transform:scaleX(0.9394);">WLIDSVC.EXE</span>
<span class="t" style="left:289.92px;top:674.00px;font-size:12.5px;transform:scaleX(1.0210);">Système</span>
<span class="t" style="left:420.91px;top:674.00px;font-size:12.5px;">00</span>
<span class="t" style="left:501.10px;top:674.00px;font-size:12.5px;transform:scaleX(0.9830);word-spacing:0.5px;">6 360 K</span>
<span class="t" style="left:579.00px;top:674.00px;font-size:12.5px;transform:scaleX(0.9830);word-spacing:0.5px;">2 204 K</span>
<span class="t" style="left:669.00px;top:674.00px;font-size:12.5px;transform:scaleX(0.9830);word-spacing:0.5px;">7 532 K</span>
<span class="t" style="left:759.52px;top:674.00px;font-size:12.5px;transform:scaleX(0.9830);word-spacing:0.5px;">5 354</span>
<span class="t" style="left:804.44px;top:674.00px;font-size:12.5px;transform:scaleX(1.0358);">Microsoft® Windows Live ID Service</span>
<span class="t" style="left:33.15px;top:694.00px;font-size:12.5px;transform:scaleX(0.9417);">WLIDSVCM.EXE</span>
<span class="t" style="left:289.92px;top:694.00px;font-size:12.5px;transform:scaleX(1.0210);">Système</span>
<span class="t" style="left:420.91px;top:694.00px;font-size:12.5px;">00</span>
<span class="t" style="left:511.84px;top:694.00px;font-size:12.5px;transform:scaleX(0.9830);word-spacing:0.5px;">952 K</span>
<span class="t" style="left:589.74px;top:694.00px;font-size:12.5px;transform:scaleX(0.9830);word-spacing:0.5px;">244 K</span>
<span class="t" style="left:669.00px;top:694.00px;font-size:12.5px;transform:scaleX(0.9830);word-spacing:0.5px;">1 488 K</span>
<span class="t" style="left:770.26px;top:694.00px;font-size:12.5px;transform:scaleX(0.9830);word-spacing:0.5px;">954</span>
<span class="t" style="left:804.44px;top:694.00px;font-size:12.5px;transform:scaleX(1.0348);">Microsoft® Windows Live ID Service Monitor</span>
<span class="t" style="left:33.15px;top:714.00px;font-size:12.5px;transform:scaleX(0.9889);">WmiPrvSE.exe</span>
<span class="t" style="left:289.92px;top:714.00px;font-size:12.5px;transform:scaleX(1.0210);">Système</span>
<span class="t" style="left:420.91px;top:714.00px;font-size:12.5px;">00</span>
<span class="t" style="left:501.10px;top:714.00px;font-size:12.5px;transform:scaleX(0.9830);word-spacing:0.5px;">4 072 K</span>
<span class="t" style="left:579.00px;top:714.00px;font-size:12.5px;transform:scaleX(0.9830);word-spacing:0.5px;">1 544 K</span>
<span class="t" style="left:669.00px;top:714.00px;font-size:12.5px;transform:scaleX(0.9830);word-spacing:0.5px;">3 388 K</span>
<span class="t" style="left:759.78px;top:714.00px;font-size:12.5px;transform:scaleX(0.9830);word-spacing:0.5px;">3 107</span>
<span class="t" style="left:805.44px;top:714.00px;font-size:12.5px;transform:scaleX(1.0083);">WMI Provider Host</span>
<span class="t" style="left:33.22px;top:734.00px;font-size:12.5px;transform:scaleX(1.0385);">wmpnetwk.exe</span>
<span class="t" style="left:289.98px;top:734.00px;font-size:12.5px;transform:scaleX(0.9176);">SERVICE RÉSEAU</span>
<span class="t" style="left:420.91px;top:734.00px;font-size:12.5px;">00</span>
<span class="t" style="left:494.26px;top:734.00px;font-size:12.5px;transform:scaleX(0.9830);word-spacing:0.5px;">18 796 K</span>
<span class="t" style="left:579.00px;top:734.00px;font-size:12.5px;transform:scaleX(0.9830);word-spacing:0.5px;">7 000 K</span>
<span class="t" style="left:662.16px;top:734.00px;font-size:12.5px;transform:scaleX(0.9830);word-spacing:0.5px;">13 464 K</span>
<span class="t" style="left:752.69px;top:734.00px;font-size:12.5px;transform:scaleX(0.9830);word-spacing:0.5px;">25 944</span>
<span class="t" style="left:804.92px;top:734.00px;font-size:12.5px;transform:scaleX(1.0197);">Service Partage réseau du Lecteur Windows Media</span>
<div id="sb"></div>
<svg width="20" height="655" viewBox="0 0 20 655" style="left:1555px;top:109px">
<defs><linearGradient id="ag" x1="0" y1="0" x2="1" y2="0"><stop offset="0" stop-color="#161616"/><stop offset=".45" stop-color="#3c3c3c"/><stop offset="1" stop-color="#a8a8a8"/></linearGradient><linearGradient id="ag2" x1="0" y1="0" x2="0" y2="1"><stop offset="0" stop-color="#141414"/><stop offset=".35" stop-color="#4a4a4a"/><stop offset="1" stop-color="#b8b8b8"/></linearGradient></defs>
<path d="M4.4 14 L9.5 8.2 L14.6 14 Z" fill="#fff" opacity=".9"/>
<path d="M5 13 L9.5 8 L14 13 Z" fill="url(#ag)"/>
<path d="M4.4 641 L9.5 647.2 L14.6 641 Z" fill="#fff" opacity=".9" transform="translate(0,.6)"/>
<path d="M5 641 L9.5 646.2 L14 641 Z" fill="url(#ag2)"/>
</svg>
<div id="thumb"><div id="grip"></div></div>

<div id="cb"><svg width="16" height="16" viewBox="0 0 16 16"><path d="M3.3 8.9 L5.3 7.5 L6.9 9.9 C8.1 7.2 9.7 4.9 11.8 2.9 L13 3.9 C10.9 6.6 9.3 9.6 8 13.1 L6 13.1 C5.3 11.5 4.4 10.1 3.3 8.9 Z" fill="#3d4f9f"/></svg></div>
<span class="t" style="left:45.97px;top:773.00px;font-size:12.5px;transform:scaleX(1.0332);">Afficher les processus de tous les utilisateurs</span>
<div id="btn"></div>
<span class="t" style="left:1436.47px;top:777.00px;font-size:12.5px;transform:scaleX(1.0398);">Arrêter le processus</span>
<div id="status"></div><div class="ssep" style="left:131px"></div><div class="ssep" style="left:296px"></div><div class="ssep" style="left:626px"></div>
<span class="t" style="left:1.67px;top:829.50px;font-size:15px;transform:scaleX(0.9150);">Processus : 107</span>
<span class="t" style="left:135.90px;top:829.50px;font-size:15px;transform:scaleX(0.9527);">UC utilisée : 16%</span>
<span class="t" style="left:300.28px;top:829.50px;font-size:15px;transform:scaleX(0.9882);">Mémoire physique : 78 %</span>
</body></html>
